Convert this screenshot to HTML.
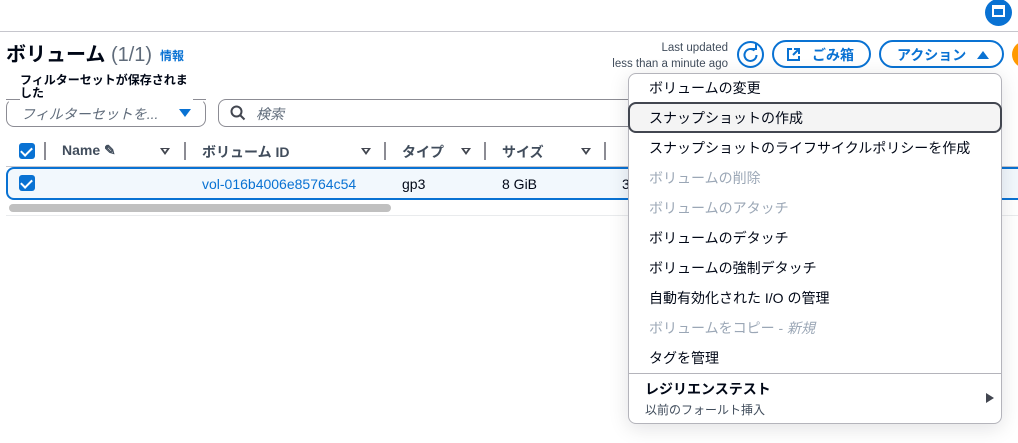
<!DOCTYPE html><html><head><meta charset="utf-8"><style>
*{box-sizing:border-box;margin:0;padding:0}
body{width:1018px;height:443px;overflow:hidden;background:#fff;font-family:"Liberation Sans","Noto Sans CJK JP",sans-serif;color:#000716;position:relative;font-size:14px}
.a{position:absolute;white-space:nowrap}
.cb{position:absolute;width:16px;height:16px;background:#0972d3;border-radius:3px}
.cb:after{content:"";position:absolute;left:4px;top:2px;width:5px;height:9px;border:solid #fff;border-width:0 2px 2px 0;transform:rotate(45deg)}
.dv{position:absolute;width:2px;height:18px;background:#8c8c94;top:142px}
.tri{position:absolute;width:0;height:0;border-left:5px solid transparent;border-right:5px solid transparent;border-top:7px solid #424650;top:148px}
.tri:after{content:"";position:absolute;left:-2px;top:-6px;border-left:2px solid transparent;border-right:2px solid transparent;border-top:3px solid #fff}
.hd{font-weight:bold;font-size:14px;top:142px;color:#414d5c}
.mi{position:absolute;left:649px;font-size:14px;white-space:nowrap}
.dis{color:#9ba7b6}
.btn{position:absolute;height:28px;border:2px solid #0972d3;border-radius:16px;color:#0972d3;font-weight:bold;font-size:14px;top:40px}
</style></head><body>
<div class="a" style="left:0;top:31px;width:1018px;height:1px;background:#c6c6cd"></div>
<div class="a" style="left:985px;top:-1px;width:27px;height:27px;border-radius:50%;background:#0972d3"></div>
<div class="a" style="left:992px;top:5px;width:13px;height:12px;border:2px solid #fff;border-top-width:4px"></div>
<div class="a" style="left:6px;top:38px;font-size:20px;font-weight:bold">ボリューム <span style="font-weight:normal;color:#5f6b7a">(1/1)</span></div>
<div class="a" style="left:160px;top:47px;font-size:12px;font-weight:bold;color:#0972d3">情報</div>
<div class="a" style="left:560px;top:40px;width:168px;text-align:right;font-size:11.5px;color:#414d5c;line-height:16px">Last updated<br>less than a minute ago</div>
<div class="a" style="left:737px;top:41px;width:27px;height:27px;border:2px solid #0972d3;border-radius:50%"></div>
<svg class="a" style="left:737px;top:41px" width="27" height="27"><path d="M17.5 9.5A6 6 0 1 0 19.5 14" stroke="#0972d3" stroke-width="2" fill="none"/><path d="M14 8h5V3" stroke="#0972d3" stroke-width="2" fill="none"/></svg>
<div class="btn" style="left:772px;width:99px"><svg class="a" style="left:13px;top:6px" width="13" height="13"><path d="M5 1H1v11h11V8M7 1h5v5M12 1L6 7" stroke="#0972d3" stroke-width="2" fill="none"/></svg><span class="a" style="left:38px;top:3px">ごみ箱</span></div>
<div class="btn" style="left:879px;width:125px"><span class="a" style="left:16px;top:3px">アクション</span><span class="a" style="left:96px;top:9px;border-left:6px solid transparent;border-right:6px solid transparent;border-bottom:8px solid #0972d3"></span></div>
<div class="a" style="left:1012px;top:41px;width:27px;height:27px;border-radius:50%;background:#ff9900"></div>
<div class="a" style="left:20px;top:74px;font-size:12px;font-weight:bold;line-height:13px">フィルターセットが保存されま<br>した</div>
<div class="a" style="left:6px;top:99px;width:200px;height:28px;border:1px solid #8c8c94;border-radius:8px;border-top-color:transparent"></div>
<div class="a" style="left:6px;top:99px;width:14px;height:1px;background:#8c8c94"></div>
<div class="a" style="left:193px;top:99px;width:13px;height:1px;background:#8c8c94"></div>
<div class="a" style="left:21px;top:104px;font-style:italic;color:#5f6b7a">フィルターセットを...</div>
<div class="a" style="left:179px;top:109px;border-left:6px solid transparent;border-right:6px solid transparent;border-top:8px solid #0972d3"></div>
<div class="a" style="left:218px;top:99px;width:430px;height:28px;border:1px solid #8c8c94;border-radius:8px"></div>
<svg class="a" style="left:230px;top:105px" width="16" height="16"><circle cx="6.5" cy="6.5" r="5" stroke="#424650" stroke-width="2" fill="none"/><path d="M10 10l4.5 4.5" stroke="#424650" stroke-width="2"/></svg>
<div class="a" style="left:256px;top:104px;font-style:italic;color:#5f6b7a">検索</div>
<div class="cb" style="left:19px;top:143px"></div>
<div class="dv" style="left:44px"></div>
<div class="a hd" style="left:62px">Name ✎</div><div class="tri" style="left:160px"></div>
<div class="dv" style="left:184px"></div>
<div class="a hd" style="left:202px">ボリューム ID</div><div class="tri" style="left:361px"></div>
<div class="dv" style="left:384px"></div>
<div class="a hd" style="left:402px">タイプ</div><div class="tri" style="left:461px"></div>
<div class="dv" style="left:484px"></div>
<div class="a hd" style="left:502px">サイズ</div><div class="tri" style="left:581px"></div>
<div class="dv" style="left:604px"></div>
<div class="a" style="left:6px;top:166px;width:1012px;height:1px;background:#c6c6cd"></div>
<div class="a" style="left:6px;top:167px;width:1030px;height:33px;background:#f2f8fd;border:2px solid #0972d3;border-radius:8px"></div>
<div class="cb" style="left:19px;top:175px"></div>
<div class="a" style="left:202px;top:176px;color:#0972d3">vol-016b4006e85764c54</div>
<div class="a" style="left:402px;top:176px">gp3</div>
<div class="a" style="left:502px;top:176px">8 GiB</div>
<div class="a" style="left:622px;top:176px">3</div>
<div class="a" style="left:9px;top:204px;width:382px;height:8px;border-radius:4px;background:#c0c0c0"></div>
<div class="a" style="left:6px;top:215px;width:1012px;height:1px;background:#e9ebed"></div>
<div class="a" style="left:628px;top:73px;width:374px;height:351px;background:#fff;border:1px solid #b4b4bb;border-radius:8px;box-shadow:0 4px 20px rgba(0,7,22,.12)"></div>
<div class="a" style="left:628px;top:102px;width:374px;height:31px;background:#f4f4f4;border:2px solid #424650;border-radius:8px"></div>
<div class="mi" style="top:78px">ボリュームの変更</div>
<div class="mi" style="top:108px">スナップショットの作成</div>
<div class="mi" style="top:138px">スナップショットのライフサイクルポリシーを作成</div>
<div class="mi dis" style="top:168px">ボリュームの削除</div>
<div class="mi dis" style="top:198px">ボリュームのアタッチ</div>
<div class="mi" style="top:228px">ボリュームのデタッチ</div>
<div class="mi" style="top:258px">ボリュームの強制デタッチ</div>
<div class="mi" style="top:288px">自動有効化された I/O の管理</div>
<div class="mi dis" style="top:318px">ボリュームをコピー - <i>新規</i></div>
<div class="mi" style="top:348px">タグを管理</div>
<div class="a" style="left:629px;top:373px;width:372px;height:1px;background:#b4b4bb"></div>
<div class="a" style="left:645px;top:379px;font-weight:bold">レジリエンステスト</div>
<div class="a" style="left:645px;top:401px;font-size:12px;color:#414d5c">以前のフォールト挿入</div>
<div class="a" style="left:986px;top:393px;border-top:5px solid transparent;border-bottom:5px solid transparent;border-left:8px solid #424650"></div>
</body></html>
